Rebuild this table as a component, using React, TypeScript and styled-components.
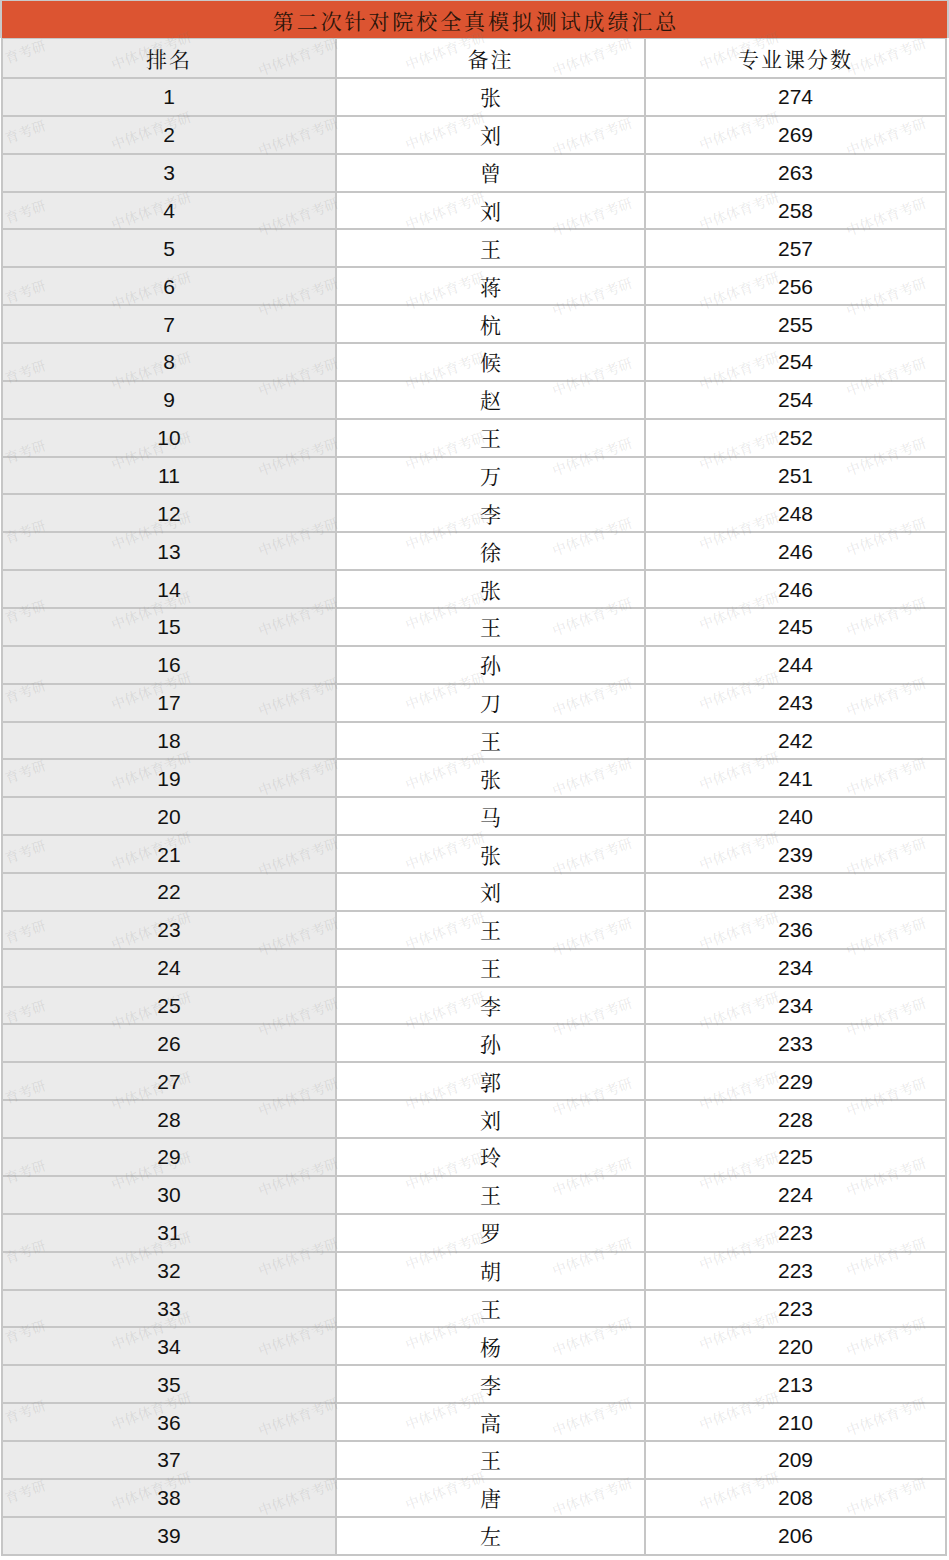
import React from "react";
import styled, { createGlobalStyle } from "styled-components";

const GlobalStyle = createGlobalStyle`
  html, body { margin: 0; padding: 0; background: #ffffff; }
  body { font-family: "Liberation Sans", Arial, sans-serif; }
`;

const CJK = `"KaiTi", "STKaiti", "AR PL UKai CN", "Noto Serif CJK SC", "Noto Sans CJK SC", serif`;

const Page = styled.div`
  position: relative;
  width: 949px;
  overflow: hidden;
`;

const Title = styled.div`
  height: 38px;
  box-sizing: border-box;
  margin: 0;
  border-top: 1px solid #c9c9c9;
  border-left: 2px solid #c9c9c9;
  border-right: 2px solid #c9c9c9;
  background: #dc5431;
  display: flex;
  align-items: center;
  justify-content: center;
  font-family: ${CJK};
  font-size: 21px;
  letter-spacing: 2.9px;
  color: #2a140a;
  padding-top: 1px;
  padding-left: 3px;
`;

const Grid = styled.div`
  margin-left: 1px;
  width: 946px;
  box-sizing: border-box;
  display: grid;
  grid-template-columns: 332px 307px 299px;
  grid-template-rows: 38px;
  grid-auto-rows: 35.87px;
  column-gap: 2px;
  row-gap: 2px;
  padding: 1px 2px 2px 2px;
  background: #c6c6c6;
`;

const Cell = styled.div<{ $shade?: boolean; $cjk?: boolean; $head?: boolean }>`
  background: ${(p) => (p.$shade ? "#ebebeb" : "#ffffff")};
  display: flex;
  align-items: center;
  justify-content: center;
  font-family: ${(p) => (p.$cjk ? CJK : `"Liberation Sans", Arial, sans-serif`)};
  font-size: 21px;
  letter-spacing: ${(p) => (p.$head ? "2px" : "0")};
  color: #111111;
  line-height: 1;
`;

const Watermarks = styled.div`
  position: absolute;
  inset: 0;
  pointer-events: none;
  overflow: hidden;
`;

const Mark = styled.span`
  position: absolute;
  font-family: ${CJK};
  font-size: 14px;
  color: rgba(120, 120, 120, 0.18);
  white-space: nowrap;
  transform: rotate(-20deg);
  transform-origin: center;
`;

const rows: [string, number][] = [
  ["张", 274], ["刘", 269], ["曾", 263], ["刘", 258], ["王", 257],
  ["蒋", 256], ["杭", 255], ["候", 254], ["赵", 254], ["王", 252],
  ["万", 251], ["李", 248], ["徐", 246], ["张", 246], ["王", 245],
  ["孙", 244], ["刀", 243], ["王", 242], ["张", 241], ["马", 240],
  ["张", 239], ["刘", 238], ["王", 236], ["王", 234], ["李", 234],
  ["孙", 233], ["郭", 229], ["刘", 228], ["玲", 225], ["王", 224],
  ["罗", 223], ["胡", 223], ["王", 223], ["杨", 220], ["李", 213],
  ["高", 210], ["王", 209], ["唐", 208], ["左", 206],
];

const marks: { x: number; y: number; t: string }[] = [];
for (let j = 0; j < 19; j++) {
  for (let i = 0; i < 7; i++) {
    const y = 40 + j * 80 + (i % 2 === 0 ? 6 : 0);
    if (i === 0) {
      marks.push({ x: 4, y: y - 5, t: "育考研" });
    } else {
      marks.push({ x: -38 + i * 147, y, t: "中体体育考研" });
    }
  }
}

export default function App() {
  return (
    <Page>
      <GlobalStyle />
      <Title>第二次针对院校全真模拟测试成绩汇总</Title>
      <Grid>
        <Cell $shade $cjk $head>排名</Cell>
        <Cell $cjk $head>备注</Cell>
        <Cell $cjk $head>专业课分数</Cell>
        {rows.map(([name, score], idx) => (
          <React.Fragment key={idx}>
            <Cell $shade>{idx + 1}</Cell>
            <Cell $cjk>{name}</Cell>
            <Cell>{score}</Cell>
          </React.Fragment>
        ))}
      </Grid>
      <Watermarks>
        {marks.map((m, k) => (
          <Mark key={k} style={{ left: m.x, top: m.y }}>{m.t}</Mark>
        ))}
      </Watermarks>
    </Page>
  );
}
